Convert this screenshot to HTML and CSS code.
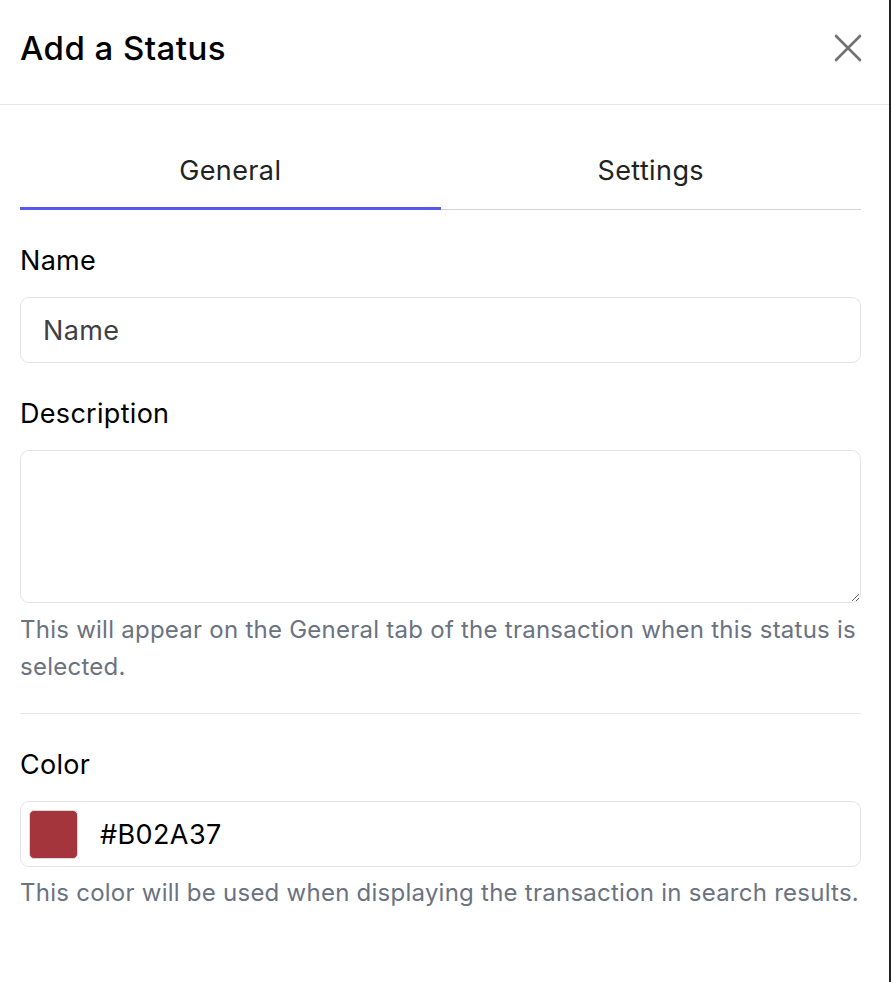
FILE: index.html
```html
<!DOCTYPE html>
<html lang="en">
<head>
    <meta charset="UTF-8">
    <meta name="viewport" content="width=device-width, initial-scale=1.0">
    <title>Add a Status</title>
    <link rel="stylesheet" href="styles.css">
</head>
<body>
    <div class="panel">
        <div class="panel-header">
            <h1>Add a Status</h1>
            <button class="close-button" aria-label="Close">
                <svg width="28" height="28" viewBox="0 0 28 28" fill="none" stroke="#737373" stroke-width="2.6" stroke-linecap="round">
                    <line x1="2" y1="2" x2="26" y2="26"/>
                    <line x1="26" y1="2" x2="2" y2="26"/>
                </svg>
            </button>
        </div>
        <div class="panel-body">
            <div class="tabs">
                <div class="tab active">General</div>
                <div class="tab">Settings</div>
            </div>

            <div class="field">
                <label for="statusName">Name</label>
                <input type="text" id="statusName" class="text-input" placeholder="Name">
            </div>

            <div class="field">
                <label for="statusDescription">Description</label>
                <textarea id="statusDescription" class="text-input textarea"></textarea>
                <p class="help">This will appear on the General tab of the transaction when this status is selected.</p>
            </div>

            <hr class="divider">

            <div class="field">
                <label for="statusColor">Color</label>
                <div class="color-input">
                    <span class="swatch"></span>
                    <span class="color-value" id="statusColor">#B02A37</span>
                </div>
                <p class="help">This color will be used when displaying the transaction in search results.</p>
            </div>
        </div>
    </div>
</body>
</html>
```

FILE: styles.css
```css
* {
    box-sizing: border-box;
}

body {
    margin: 0;
    font-family: Inter, "Noto Sans", sans-serif;
    background-color: #ffffff;
    color: #000000;
}

.panel {
    width: 891px;
    min-height: 982px;
    border-right: 2px solid #222222;
}

.panel-header {
    display: flex;
    align-items: center;
    justify-content: space-between;
    padding: 28px 28px 36px 20px;
    border-bottom: 1px solid #e5e7eb;
}

.panel-header h1 {
    margin: 0;
    font-size: 33px;
    font-weight: 500;
    line-height: 40px;
    letter-spacing: 0.45px;
    color: #000000;
}

.close-button {
    background: none;
    border: none;
    padding: 0;
    margin-right: -1px;
    width: 28px;
    height: 28px;
    cursor: pointer;
}

.panel-body {
    padding: 30px 28px 40px 20px;
}

.tabs {
    display: grid;
    grid-template-columns: 1fr 1fr;
}

.tab {
    text-align: center;
    font-size: 27px;
    line-height: 36px;
    letter-spacing: 0.4px;
    padding: 18px 0;
    color: #222222;
    border-bottom: 1px solid #d1d5db;
    cursor: pointer;
}

.tab.active {
    border-bottom: 3px solid #5858ea;
}

.field {
    margin-top: 33px;
}

.field label {
    display: block;
    font-size: 27px;
    line-height: 36px;
    letter-spacing: 0.3px;
    margin-bottom: 18px;
    color: #000000;
}

.text-input {
    display: block;
    width: 100%;
    height: 66px;
    padding: 0 22px;
    font-family: inherit;
    font-size: 27px;
    letter-spacing: 0.4px;
    color: #000000;
    border: 1px solid #e3e4e8;
    border-radius: 9px;
    outline: none;
}

.text-input::placeholder {
    color: #3f3f46;
}

.textarea {
    height: 153px;
    padding: 14px 22px;
    resize: vertical;
}

.help {
    margin: 8px 0 0;
    font-size: 24px;
    line-height: 37px;
    letter-spacing: 0.25px;
    color: #6b7280;
}

.divider {
    border: none;
    border-top: 1px solid #e5e7eb;
    margin: 28px 0 0;
}

.color-input {
    display: flex;
    align-items: center;
    height: 66px;
    padding: 0 8px;
    border: 1px solid #e3e4e8;
    border-radius: 9px;
}

.swatch {
    width: 49px;
    height: 49px;
    border-radius: 5px;
    background-color: #a5353c;
    border: 1px solid #d9d9d9;
}

.color-value {
    margin-left: 22px;
    font-size: 27px;
    letter-spacing: 0.4px;
    color: #000000;
}

.color-input + .help {
    margin-top: 7px;
}
```
